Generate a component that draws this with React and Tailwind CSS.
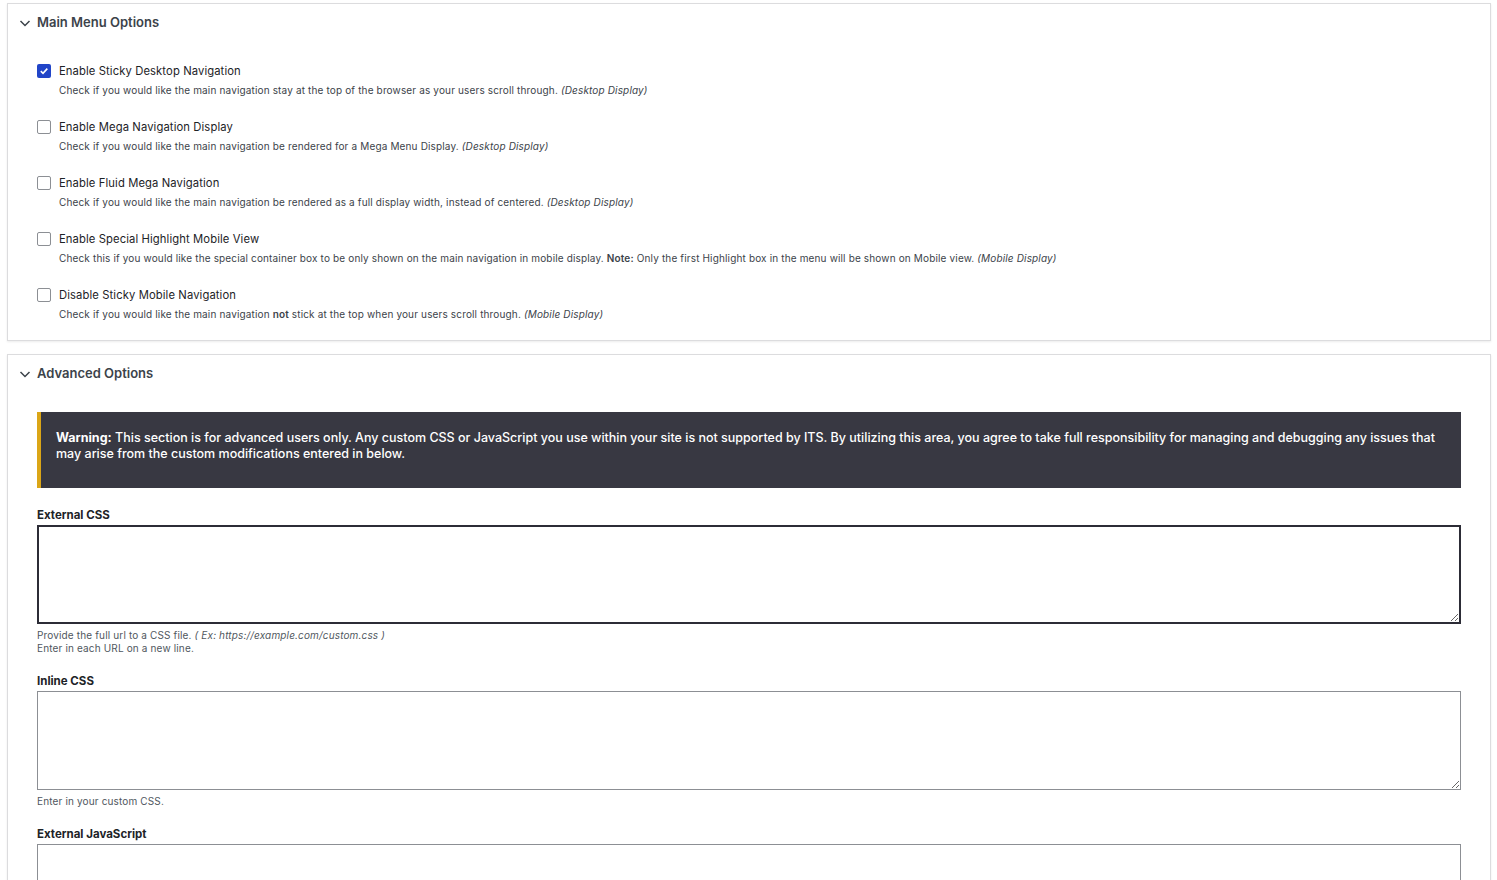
import React, { useState } from "react";

const font = { fontFamily: "Inter, 'Noto Sans', sans-serif" };

function Chevron() {
  return (
    <svg width="12" height="12" viewBox="0 0 12 12" className="shrink-0">
      <path d="M1.5 4 L6 8.5 L10.5 4" fill="none" stroke="#3c434a" strokeWidth="1.5" />
    </svg>
  );
}

function Box({ checked, onClick }) {
  return (
    <button
      onClick={onClick}
      className={
        "w-[14px] h-[14px] rounded-[2px] flex items-center justify-center shrink-0 " +
        (checked ? "bg-[#2145c8]" : "border border-[#8c8f94] bg-white")
      }
    >
      {checked && (
        <svg width="10" height="10" viewBox="0 0 10 10">
          <path d="M1.8 5.2 L4 7.3 L8.3 2.6" fill="none" stroke="white" strokeWidth="1.6" />
        </svg>
      )}
    </button>
  );
}

const menuOptions = [
  {
    label: "Enable Sticky Desktop Navigation",
    desc: <>Check if you would like the main navigation stay at the top of the browser as your users scroll through. <i>(Desktop Display)</i></>,
    on: true,
  },
  {
    label: "Enable Mega Navigation Display",
    desc: <>Check if you would like the main navigation be rendered for a Mega Menu Display. <i>(Desktop Display)</i></>,
  },
  {
    label: "Enable Fluid Mega Navigation",
    desc: <>Check if you would like the main navigation be rendered as a full display width, instead of centered. <i>(Desktop Display)</i></>,
  },
  {
    label: "Enable Special Highlight Mobile View",
    desc: <>Check this if you would like the special container box to be only shown on the main navigation in mobile display. <b className="font-semibold">Note:</b> Only the first Highlight box in the menu will be shown on Mobile view. <i>(Mobile Display)</i></>,
  },
  {
    label: "Disable Sticky Mobile Navigation",
    desc: <>Check if you would like the main navigation <b className="font-semibold">not</b> stick at the top when your users scroll through. <i>(Mobile Display)</i></>,
  },
];

function Section({ title, children, className = "" }) {
  return (
    <div className={"bg-white border border-[#dcdcde] shadow-[0_1px_2px_rgba(0,0,0,0.08)] " + className}>
      <div className="flex items-center gap-[6px] pl-[11px] h-[38px]">
        <Chevron />
        <h2 className="text-[13px] font-semibold text-[#3c434a]">{title}</h2>
      </div>
      {children}
    </div>
  );
}

function Field({ label, help, focused }) {
  return (
    <div>
      <div className="text-[11.5px] font-bold text-[#1d2327] leading-[14px] mb-[3px]">{label}</div>
      <textarea
        className={
          "block w-full h-[99px] resize-y bg-white outline-none " +
          (focused ? "border-2 border-[#2c2c36]" : "border border-[#8c8f94]")
        }
      />
      {help && <div className="text-[10px] leading-[13px] text-[#50575e] mt-[5px] tracking-[0.15px]">{help}</div>}
    </div>
  );
}

export default function App() {
  const [opts, setOpts] = useState(menuOptions.map((o) => !!o.on));

  return (
    <div style={font} className="bg-white min-h-screen pl-[7px] pr-[6px] pt-[3px]">
      <Section title="Main Menu Options" className="pb-[19px]">
        <div className="pl-[29px] pt-[21px] flex flex-col gap-[22px]">
          {menuOptions.map((o, i) => (
            <div key={i}>
              <label className="flex items-center gap-[8px] h-[16px]">
                <Box checked={opts[i]} onClick={() => setOpts(opts.map((v, j) => (j === i ? !v : v)))} />
                <span className="text-[11.25px] text-[#1d2327] tracking-[0.1px]">{o.label}</span>
              </label>
              <p className="pl-[22px] mt-[4px] text-[10px] leading-[14px] text-[#3c434a] tracking-[0.15px]">{o.desc}</p>
            </div>
          ))}
        </div>
      </Section>

      <Section title="Advanced Options" className="mt-[13px] pb-[40px]">
        <div className="pl-[29px] pr-[29px] pt-[19px]">
          <div className="bg-[#383842] border-l-4 border-[#dba617] pl-[15px] pr-[20px] pt-[18px] pb-[26px] text-white text-[12.5px] font-medium leading-[16px]">
            <b className="font-bold">Warning:</b> This section is for advanced users only. Any custom CSS or JavaScript you use within your site is not supported by ITS. By utilizing this area, you agree to take full responsibility for managing and debugging any issues that<br />
            may arise from the custom modifications entered in below.
          </div>

          <div className="mt-[20px] flex flex-col gap-[19px]">
            <Field
              label="External CSS"
              focused
              help={
                <>
                  Provide the full url to a CSS file. <i>( Ex: https://example.com/custom.css )</i>
                  <br />
                  Enter in each URL on a new line.
                </>
              }
            />
            <Field label="Inline CSS" help="Enter in your custom CSS." />
            <Field label="External JavaScript" />
          </div>
        </div>
      </Section>
    </div>
  );
}
